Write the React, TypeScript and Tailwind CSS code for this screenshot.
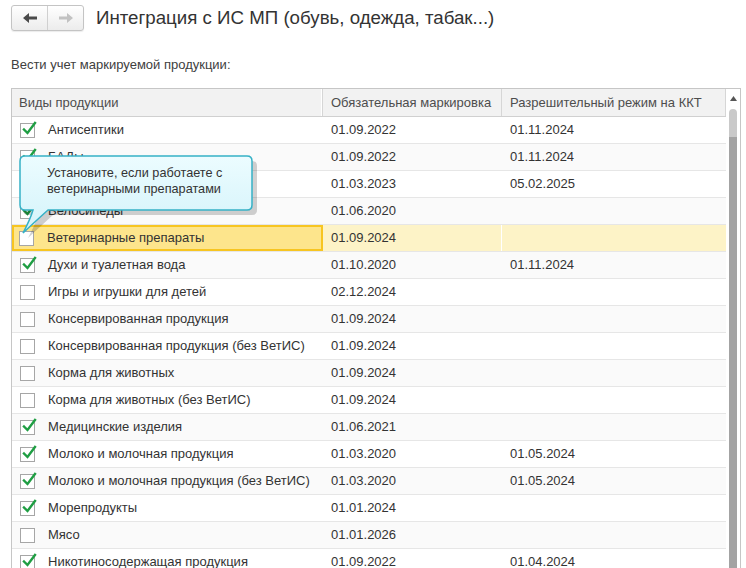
import React from "react";

type Row = {
  name: string;
  checked: boolean;
  mandatory: string;
  permit: string;
};

const rows: Row[] = [
  { name: "Антисептики", checked: true, mandatory: "01.09.2022", permit: "01.11.2024" },
  { name: "БАДы", checked: true, mandatory: "01.09.2022", permit: "01.11.2024" },
  { name: "Безалкогольное пиво", checked: true, mandatory: "01.03.2023", permit: "05.02.2025" },
  { name: "Велосипеды", checked: true, mandatory: "01.06.2020", permit: "" },
  { name: "Ветеринарные препараты", checked: false, mandatory: "01.09.2024", permit: "" },
  { name: "Духи и туалетная вода", checked: true, mandatory: "01.10.2020", permit: "01.11.2024" },
  { name: "Игры и игрушки для детей", checked: false, mandatory: "02.12.2024", permit: "" },
  { name: "Консервированная продукция", checked: false, mandatory: "01.09.2024", permit: "" },
  { name: "Консервированная продукция (без ВетИС)", checked: false, mandatory: "01.09.2024", permit: "" },
  { name: "Корма для животных", checked: false, mandatory: "01.09.2024", permit: "" },
  { name: "Корма для животных (без ВетИС)", checked: false, mandatory: "01.09.2024", permit: "" },
  { name: "Медицинские изделия", checked: true, mandatory: "01.06.2021", permit: "" },
  { name: "Молоко и молочная продукция", checked: true, mandatory: "01.03.2020", permit: "01.05.2024" },
  { name: "Молоко и молочная продукция (без ВетИС)", checked: true, mandatory: "01.03.2020", permit: "01.05.2024" },
  { name: "Морепродукты", checked: true, mandatory: "01.01.2024", permit: "" },
  { name: "Мясо", checked: false, mandatory: "01.01.2026", permit: "" },
  { name: "Никотиносодержащая продукция", checked: true, mandatory: "01.09.2022", permit: "01.04.2024" },
];

const SELECTED = 4;

function Checkbox({ checked }: { checked: boolean }) {
  return (
    <span className="relative inline-block w-[15px] h-[15px] border border-[#a6a6a6] bg-white shrink-0">
      {checked && (
        <svg
          className="absolute left-[1px] top-[-3px]"
          width="15"
          height="15"
          viewBox="0 0 15 15"
        >
          <path
            d="M2 8.5 L5.5 12 L13 2"
            fill="none"
            stroke="#1f9e43"
            strokeWidth="2.4"
            strokeLinecap="square"
          />
        </svg>
      )}
    </span>
  );
}

function NavButtons() {
  return (
    <div className="flex h-[26px] w-[73px] rounded-[3px] border border-[#c4c4c4] bg-gradient-to-b from-white to-[#ececec] shadow-[0_1px_1px_rgba(0,0,0,0.08)]">
      <div className="flex-1 flex items-center justify-center border-r border-[#d0d0d0]">
        <svg width="14" height="10" viewBox="0 0 14 10">
          <path d="M0 5 L6 0 L6 3.5 L14 3.5 L14 6.5 L6 6.5 L6 10 Z" fill="#4a4a4a" />
        </svg>
      </div>
      <div className="flex-1 flex items-center justify-center">
        <svg width="14" height="10" viewBox="0 0 14 10">
          <path d="M14 5 L8 0 L8 3.5 L0 3.5 L0 6.5 L8 6.5 L8 10 Z" fill="#c2c2c2" />
        </svg>
      </div>
    </div>
  );
}

function Tooltip() {
  return (
    <div className="absolute left-[18px] top-[154px] w-[240px] h-[86px]">
      <svg className="absolute inset-0" width="240" height="86" viewBox="0 0 240 86">
        <defs>
          <linearGradient id="tipfill" x1="0" y1="0" x2="0" y2="1">
            <stop offset="0" stopColor="#ecfcff" />
            <stop offset="1" stopColor="#d3f3fa" />
          </linearGradient>
        </defs>
        <path
          d="M9 4 H231 Q236 4 236 9 V53 Q236 58 231 58 H32 Q22 67 7 81 Q14 68 17 58 H7 Q2 58 2 53 V9 Q2 4 7 4 Z"
          fill="rgba(0,0,0,0.18)"
          transform="translate(3 3)"
        />
        <path
          d="M7 2 H229 Q234 2 234 7 V51 Q234 56 229 56 H30 Q20 65 5 79 Q12 66 15 56 H7 Q2 56 2 51 V7 Q2 2 7 2 Z"
          fill="url(#tipfill)"
          stroke="#36b1c6"
          strokeWidth="1.5"
        />
      </svg>
      <div className="absolute left-[29px] top-[11px] text-[12.7px] leading-[16px] text-[#333]">
        <div>Установите, если работаете с</div>
        <div>ветеринарными препаратами</div>
      </div>
    </div>
  );
}

export default function App() {
  return (
    <div
      className="relative w-[746px] h-[568px] overflow-hidden bg-white text-[#333]"
      style={{ fontFamily: '"Liberation Sans", Arial, sans-serif' }}
    >
      <div className="flex items-center gap-[12px] pl-[11px] pt-[5px]">
        <NavButtons />
        <h1 className="text-[18.7px] leading-[26px] text-[#333]">
          Интеграция с ИС МП (обувь, одежда, табак...)
        </h1>
      </div>

      <div className="pl-[11px] pt-[26px] text-[13px] leading-[16px] text-[#404040]">
        Вести учет маркируемой продукции:
      </div>

      <div className="ml-[11px] mr-[5px] mt-[15px] flex border border-[#c6c6c6] border-b-0 h-[490px]">
        <div className="flex-1 flex flex-col text-[13px]">
          <div className="flex h-[28px] bg-[#f2f2f2] border-b border-[#d0d0d0] text-[#4d4d4d] shrink-0">
            <div className="w-[311px] flex items-center pl-[7px] border-r border-[#d6d6d6] shadow-[inset_-1px_0_0_#fff]">
              Виды продукции
            </div>
            <div className="w-[179px] flex items-center pl-[8px] border-r border-[#d6d6d6]">
              Обязательная маркировка
            </div>
            <div className="flex-1 flex items-center pl-[8px] border-r border-[#d6d6d6]">
              Разрешительный режим на ККТ
            </div>
          </div>
          {rows.map((r, i) => {
            const sel = i === SELECTED;
            const bg = sel ? "bg-[#fdf3c7]" : i % 2 === 1 ? "bg-[#fafafa]" : "bg-white";
            return (
              <div key={r.name} className={`flex h-[27px] shrink-0 border-b border-[#e6e6e6] ${bg}`}>
                <div
                  className={`w-[311px] flex items-center gap-[13px] ${
                    sel ? "bg-[#fde58c] border-2 border-[#f7c521] pl-[5px]" : "pl-[8px]"
                  }`}
                >
                  <Checkbox checked={r.checked} />
                  <span>{r.name}</span>
                </div>
                <div className={`w-[179px] flex items-center pl-[8px] ${sel ? "border-r border-white" : ""}`}>
                  {r.mandatory}
                </div>
                <div className="flex-1 flex items-center pl-[8px]">{r.permit}</div>
              </div>
            );
          })}
        </div>
        <div className="w-[14px] flex flex-col items-center shrink-0 pt-[7px]">
          <svg width="7" height="5" viewBox="0 0 7 5">
            <path d="M0 5 L3.5 0 L7 5 Z" fill="#555" />
          </svg>
          <div className="mt-[8px] w-[8px] flex-1 flex flex-col">
            <div className="h-[28px] rounded-t-[4px] bg-[#c9c9c9]" />
            <div className="flex-1 bg-[#a3a3a3]" />
          </div>
        </div>
      </div>

      <Tooltip />
    </div>
  );
}
